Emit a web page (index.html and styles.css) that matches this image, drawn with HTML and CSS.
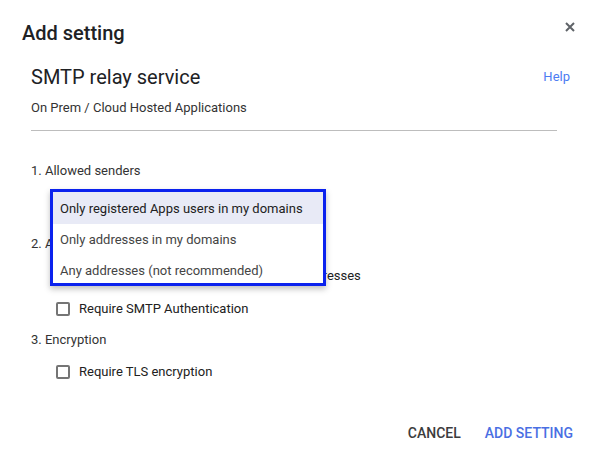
FILE: index.html
```html
<!DOCTYPE html>
<html>
<head>
<meta charset="utf-8">
<link rel="stylesheet" href="styles.css">
</head>
<body>
<div class="dialog">
  <div class="head">
    <h1 class="title">Add setting</h1>
    <svg class="close" width="10" height="10" viewBox="0 0 10 10"><path d="M1 1L9 9M9 1L1 9" stroke="#5f6368" stroke-width="2"/></svg>
  </div>
  <div class="body">
    <div class="subhead">
      <h2 class="service">SMTP relay service</h2>
      <a class="help">Help</a>
    </div>
    <div class="org">On Prem / Cloud Hosted Applications</div>
    <div class="divider"></div>
    <div class="section first">1. Allowed senders</div>
    <div class="select-slot"></div>
    <div class="section">2. Authentication</div>
    <label class="check"><span class="box"></span>Only accept mail from the specified IP addresses</label>
    <label class="check"><span class="box"></span>Require SMTP Authentication</label>
    <div class="section s3">3. Encryption</div>
    <label class="check"><span class="box"></span>Require TLS encryption</label>
  </div>
  <div class="actions">
    <span class="btn cancel">CANCEL</span>
    <span class="btn primary">ADD SETTING</span>
  </div>
  <div class="menu">
    <div class="opt selected">Only registered Apps users in my domains</div>
    <div class="opt">Only addresses in my domains</div>
    <div class="opt">Any addresses (not recommended)</div>
  </div>
</div>
</body>
</html>
```
FILE: styles.css
```css
* { box-sizing: border-box; }
html, body { margin: 0; padding: 0; background: #fff; }
body { font-family: Roboto, "Liberation Sans", Arial, sans-serif; color: #212121; width: 591px; height: 451px; overflow: hidden; }
.dialog { position: relative; padding: 21px 0 0 22px; height: 451px; }
.head { display: flex; justify-content: space-between; align-items: center; padding-right: 16px; }
.title { margin: 0; font-size: 20px; font-weight: 500; line-height: 24px; color: #202124; }
.close { margin-top: -13px; }
.body { padding-left: 9px; padding-right: 34px; }
.subhead { display: flex; justify-content: space-between; align-items: center; margin-top: 20px; margin-right: -13px; }
.service { margin: 0; font-size: 20px; font-weight: 400; line-height: 24px; color: #202124; }
.help { font-size: 13px; color: #4d7cf2; line-height: 16px; }
.org { margin-top: 11px; font-size: 13px; line-height: 16px; color: #333; }
.divider { margin-top: 14px; height: 1px; background: #bdbdbd; }
.section { font-size: 13px; line-height: 16px; color: #333; }
.section.first { margin-top: 32px; }
.select-slot { height: 57px; }
.check { display: flex; align-items: center; margin-left: 25px; font-size: 13px; line-height: 16px; color: #212121; margin-top: 16px; }
.section + .check { margin-top: 16px; }
.check + .check { margin-top: 17px; }
.section.s3 { margin-top: 15px; }
.box { width: 14px; height: 14px; border: 2px solid #757575; border-radius: 2px; margin-right: 9px; flex: none; }
.actions { display: flex; justify-content: flex-end; gap: 24px; padding-right: 18px; margin-top: 45px; }
.btn { font-size: 14px; font-weight: 500; line-height: 16px; }
.cancel { color: #3c3c3c; }
.primary { color: #4a6fe3; }
.menu { position: absolute; left: 50px; top: 189px; width: 276px; height: 97px; overflow: hidden; border: 3px solid #0b22ee; background: #fff; box-shadow: 0 3px 6px rgba(0,0,0,0.25); padding-top: 1px; }
.opt { height: 31px; line-height: 31px; padding-left: 7px; font-size: 13px; color: #444; }
.opt.selected { background: #e8eaf6; color: #212121; margin-top: -1px; height: 32px; line-height: 33px; }
```
